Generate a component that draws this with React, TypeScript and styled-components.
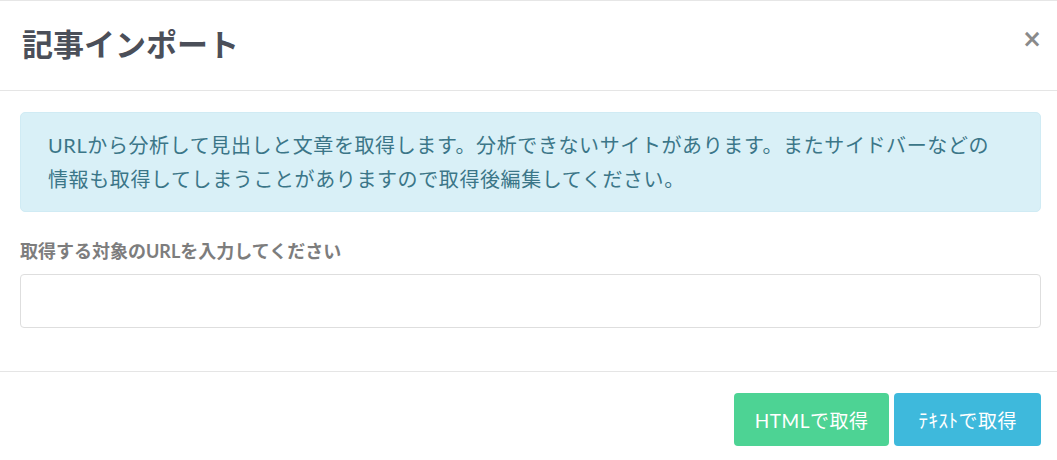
import React from 'react';
import styled, { createGlobalStyle } from 'styled-components';

const GlobalStyle = createGlobalStyle`
  html, body {
    margin: 0;
    padding: 0;
    background: #ffffff;
  }
  body {
    font-family: Lato, "Noto Sans CJK JP", sans-serif;
  }
`;

const Modal = styled.div`
  width: 1057px;
  height: 460px;
  overflow: hidden;
  background: #ffffff;
  border-top: 1px solid #e6e6e6;
  box-sizing: border-box;
`;

const Header = styled.div`
  display: flex;
  align-items: center;
  justify-content: space-between;
  height: 89px;
  padding: 0 15px 0 22px;
  border-bottom: 1px solid #e5e5e5;
  box-sizing: content-box;
`;

const Title = styled.h4`
  margin: 0 0 4px;
  font-size: 31px;
  font-weight: 700;
  line-height: 40px;
  color: #4b4f59;
`;

const Close = styled.button`
  border: none;
  background: none;
  padding: 0;
  margin-bottom: 14px;
  font-family: "DejaVu Sans", sans-serif;
  font-size: 24px;
  font-weight: 700;
  line-height: 1;
  color: #8a8a8a;
  cursor: pointer;
`;

const Body = styled.div`
  padding: 21px 16px 43px 20px;
`;

const Alert = styled.div`
  padding: 15px 45px 15px 27px;
  background: #d9f0f7;
  border: 1px solid #d0ebf4;
  border-radius: 5px;
  color: #3b7688;
  font-size: 20px;
  line-height: 34px;
  letter-spacing: 0.6px;
`;

const Label = styled.label`
  display: block;
  margin: 27px 0 11px;
  font-size: 18px;
  font-weight: 700;
  line-height: 24px;
  color: #7d7d7d;
`;

const Input = styled.input`
  display: block;
  width: 100%;
  height: 54px;
  box-sizing: border-box;
  border: 1px solid #dedede;
  border-radius: 4px;
  padding: 0 14px;
  font-size: 16px;
  outline: none;
`;

const Footer = styled.div`
  display: flex;
  justify-content: flex-end;
  gap: 5px;
  padding: 21px 16px 15px 20px;
  border-top: 1px solid #e5e5e5;
`;

const Button = styled.button<{ $tone: 'green' | 'blue' }>`
  height: 53px;
  padding: 0 ${(p) => (p.$tone === 'green' ? '21px' : '24px')};
  border: none;
  border-radius: 4px;
  background: ${(p) => (p.$tone === 'green' ? '#4dd394' : '#3eb9dc')};
  color: #ffffff;
  font-family: Lato, "Noto Sans CJK JP", sans-serif;
  font-size: 19px;
  letter-spacing: 0.5px;
  white-space: nowrap;
  cursor: pointer;
`;

const App: React.FC = () => {
  return (
    <>
      <GlobalStyle />
      <Modal>
        <Header>
          <Title>記事インポート</Title>
          <Close aria-label="close">×</Close>
        </Header>
        <Body>
          <Alert>
            URLから分析して見出しと文章を取得します。分析できないサイトがあります。またサイドバーなどの情報も取得してしまうことがありますので取得後編集してください。
          </Alert>
          <Label htmlFor="url">取得する対象のURLを入力してください</Label>
          <Input id="url" type="text" />
        </Body>
        <Footer>
          <Button $tone="green">HTMLで取得</Button>
          <Button $tone="blue">ﾃｷｽﾄで取得</Button>
        </Footer>
      </Modal>
    </>
  );
};

export default App;
